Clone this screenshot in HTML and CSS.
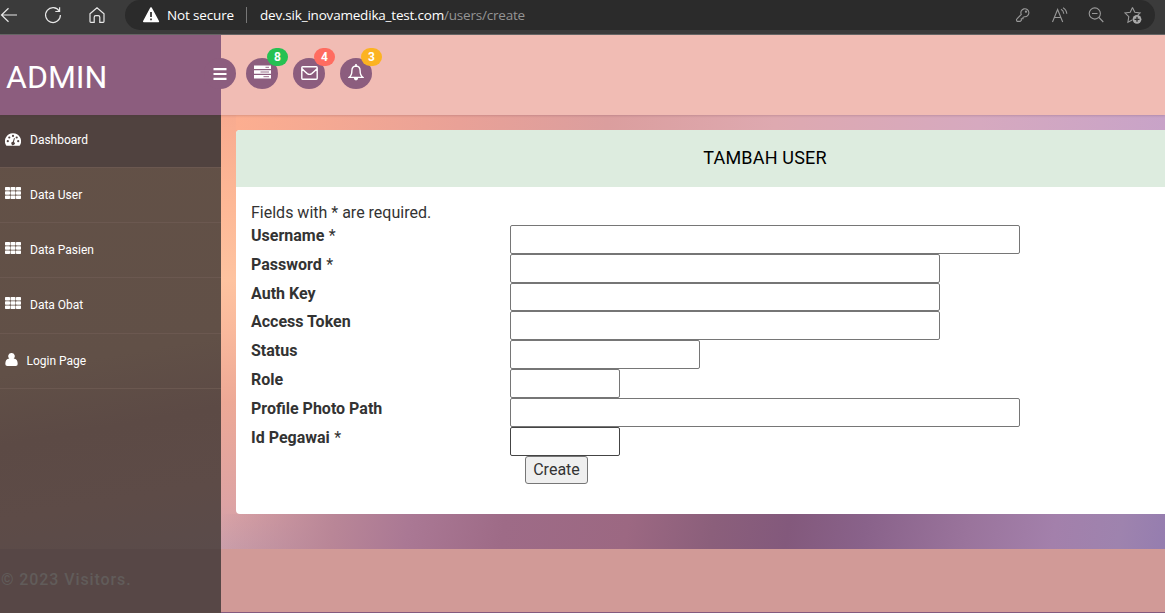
FILE: index.html
```html
<!DOCTYPE html>
<html lang="id">
<head>
<meta charset="utf-8">
<title>Tambah User</title>
<link rel="stylesheet" href="styles.css">
</head>
<body>
<svg class="defs" width="0" height="0">
  <symbol id="grid" viewBox="0 0 16 12"><path fill="currentColor" d="M.7 0h3.6q.7 0 .7.7v2.1q0 .7-.7.7H.7Q0 3.500 0 2.800V.7Q0 0 .7 0zM6.200 0h3.600q.7 0 .7.7v2.100q0 .7-.7.7H6.200q-.7 0-.7-.7V.7q0-.7.7-.7zM11.700 0h3.600q.7 0 .7.7v2.100q0 .7-.7.7h-3.600q-.7 0-.7-.7V.7q0-.7.7-.7zM.7 4.200h3.600q.7 0 .7.7v2.100q0 .7-.7.7H.7Q0 7.700 0 7V4.900q0-.7.7-.7zM6.200 4.200h3.600q.7 0 .7.7v2.100q0 .7-.7.7H6.200q-.7 0-.7-.7V4.900q0-.7.7-.7zM11.700 4.200h3.600q.7 0 .7.7v2.100q0 .7-.7.7h-3.600q-.7 0-.7-.7V4.900q0-.7.7-.7zM.7 8.400h3.600q.7 0 .7.7v2.200q0 .7-.7.7H.7q-.7 0-.7-.7V9.100q0-.7.7-.7zM6.200 8.400h3.600q.7 0 .7.7v2.200q0 .7-.7.7H6.200q-.7 0-.7-.7V9.100q0-.7.7-.7zM11.700 8.400h3.600q.7 0 .7.7v2.200q0 .7-.7.7h-3.600q-.7 0-.7-.7V9.100q0-.7.7-.7z"/></symbol>
</svg>

<div class="browser">
  <div class="nav">
    <svg width="18" height="18" viewBox="0 0 18 18"><path d="M17 9H1.500M8.500 2.200 1.500 9l7 6.800"/></svg>
    <svg width="18" height="18" viewBox="0 0 18 18"><path d="M15.300 5.200A7.400 7.400 0 1 0 16.400 9M15.600 1.200v4.300h-4.300"/></svg>
    <svg width="18" height="18" viewBox="0 0 18 18"><path d="M2 7.800 9 1.700l7 6.100v7.700q0 .8-.8.800h-3.400v-5q0-1.600-1.600-1.600H7.800q-1.600 0-1.600 1.600v5H2.800q-.8 0-.8-.8z"/></svg>
  </div>
  <div class="address">
    <svg class="warn" width="17" height="16" viewBox="0 0 17 16"><path d="M8 1 15.300 14.500H.8z" fill="#fff" stroke="#fff" stroke-width="1.600" stroke-linejoin="round"/><path d="M8 5v5M8 11.500v1.700" stroke="#2b2b2b" stroke-width="1.700"/></svg>
    <span class="insecure">Not secure</span>
    <span class="divider"></span>
    <span class="url">dev.sik_inovamedika_test.com<span>/users/create</span></span>
    <div class="tools">
      <svg width="16" height="16" viewBox="0 0 16 16"><path d="M6.300 7.500A4 4 0 1 1 9.400 9.700L8 10.300v1.500H6.300v1.600l-1.200 1H2.300q-.9-.4-.8-2z"/><circle cx="11" cy="4.700" r=".6"/></svg>
      <svg width="17" height="16" viewBox="0 0 17 16"><path d="M1.500 15 6.600 2.500 11.700 15M3.300 10.500h6.600M10 2.200q2.500 1.300 2.800 4.600M12 .7q3.500 2 3.800 6.100"/></svg>
      <svg width="16" height="16" viewBox="0 0 16 16"><circle cx="6.800" cy="6.500" r="5.600"/><path d="m11 10.500 4.300 4.500M4 6.500h5.500"/></svg>
      <svg width="18" height="18" viewBox="0 0 18 18"><path d="m8.500 1.500 2.300 4.700 5.300.7-2.500 2.500M8.500 1.500 6.200 6.200.9 6.900l3.900 3.800-.9 5.600 4.300-2.300"/><circle cx="13" cy="13.300" r="4.400" fill="#aaa" stroke="none"/><path d="M13 10.800v5M10.500 13.300h5" stroke="#2b2b2b" stroke-width="1.300"/></svg>
    </div>
  </div>
</div>

<header class="top">
  <div class="brand">ADMIN</div>
  <div class="round toggle"><svg width="14" height="12" viewBox="0 0 14 12"><path d="M.5 1.200h13M.5 6h13M.5 10.800h13" stroke="#fff" stroke-width="2.200"/></svg></div>
  <div class="round">
    <svg class="tasks" width="17" height="14" viewBox="0 0 17 14"><path fill="#fff" d="M0 .5h17v3.600H0zM0 5.200h17v3.600H0zM0 9.900h17v3.600H0z"/><path d="M11.500 2.300H15M6.500 7H15M9.500 11.700H15" stroke="#8c5d7e" stroke-width=".9"/></svg>
    <span class="badge green">8</span>
  </div>
  <div class="round">
    <svg width="17" height="14" viewBox="0 0 17 14"><path d="M1.700.8h13.600q.9 0 .9.900v10.600q0 .9-.9.900H1.700q-.9 0-.9-.9V1.700q0-.9.900-.9zM1 2.800q2.500 2.600 5.300 4.800 2.200 1.500 4.400 0Q13.500 5.400 16 2.800" fill="none" stroke="#fff" stroke-width="1.400"/></svg>
    <span class="badge red">4</span>
  </div>
  <div class="round">
    <svg class="bell" width="16" height="17" viewBox="0 0 16 17"><path d="M8 2Q4 2.400 3.900 6.500q0 4.800-2.700 6.900h13.600q-2.700-2.100-2.700-6.900Q12 2.400 8 2z" fill="none" stroke="#fff" stroke-width="1.400"/><path d="M7.200 0h1.600v2H7.200zM5.800 14h4.400Q10 16.400 8 16.400T5.800 14z" fill="#fff"/></svg>
    <span class="badge amber">3</span>
  </div>
</header>

<div class="body">
  <nav class="side">
    <a class="item active"><svg width="16" height="13" viewBox="0 0 16 13"><path fill="#fff" d="M8 .2a8 8 0 0 1 6.900 12.100q-.3.500-.8.500H1.900q-.5 0-.8-.5A8 8 0 0 1 8 .2z"/><g fill="#50423f"><circle cx="2.800" cy="8.200" r="1.100"/><circle cx="4.300" cy="4.500" r="1.100"/><circle cx="8" cy="2.900" r="1.100"/><circle cx="11.700" cy="4.500" r="1.100"/><circle cx="13.200" cy="8.200" r="1.100"/><path d="m9 5 .9.200-1 3.700a1.700 1.700 0 1 1-1.100-.2z"/></g></svg>Dashboard</a>
    <a class="item"><svg class="up" width="16" height="12"><use href="#grid"/></svg>Data User</a>
    <a class="item"><svg class="up" width="16" height="12"><use href="#grid"/></svg>Data Pasien</a>
    <a class="item"><svg class="up" width="16" height="12"><use href="#grid"/></svg>Data Obat</a>
    <a class="item login"><svg class="up" width="13" height="13" viewBox="0 0 13 13"><path fill="#fff" d="M6.500 0a3.200 3.200 0 0 1 2.200 5.600Q12.700 6 12.700 11q0 2-2 2H2.300q-2 0-2-2 0-5 4-5.400A3.200 3.200 0 0 1 6.500 0z"/></svg>Login Page</a>
  </nav>
  <main class="main">
    <section class="card">
      <h1>TAMBAH USER</h1>
      <form class="form">
        <p>Fields with * are required.</p>
        <div class="row"><label>Username <i>*</i></label><input class="w510"></div>
        <div class="row"><label>Password <i>*</i></label><input class="w430"></div>
        <div class="row"><label>Auth Key</label><input class="w430"></div>
        <div class="row"><label>Access Token</label><input class="w430"></div>
        <div class="row"><label>Status</label><input class="w190"></div>
        <div class="row"><label>Role</label><input class="w110"></div>
        <div class="row"><label>Profile Photo Path</label><input class="w510"></div>
        <div class="row"><label>Id Pegawai <i>*</i></label><input class="w110 dark"></div>
        <button type="button">Create</button>
      </form>
    </section>
  </main>
</div>
<footer class="foot"><div>© 2023 Visitors.</div></footer>
</body>
</html>
```
FILE: styles.css
```css
* { box-sizing: border-box; }
body { margin: 0; height: 613px; overflow: hidden; display: flex; flex-direction: column; font-family: Roboto, sans-serif; color: #333; }
.defs { position: absolute; }
svg { flex: none; display: block; }

.browser { height: 35px; flex: none; background: #3b3b3b; border-bottom: 1px solid #666; display: flex; align-items: flex-start; }
.nav { width: 125px; height: 30px; display: flex; align-items: center; gap: 26px; }
.nav svg { fill: none; stroke: #e8e8e8; stroke-width: 1.2; }
.address { width: 1030px; height: 30px; background: #2b2b2b; border-radius: 15px; display: flex; align-items: center; padding: 0 13px 0 18px; font: 14px "Open Sans", sans-serif; color: #fff; }
.insecure { margin-left: 7px; width: 79px; font-size: 13.5px; letter-spacing: -.15px; white-space: nowrap; }
.divider { width: 1px; height: 16px; background: #777; margin: 0 13px 0 0; }
.url { font-size: 13.5px; letter-spacing: -.2px; white-space: nowrap; }
.url span { color: #959595; }
.tools { margin-left: auto; display: flex; align-items: center; gap: 20px; }
.tools svg { fill: none; stroke: #999; stroke-width: 1.1; }

.top { height: 80px; flex: none; background: #f1bcb4; display: flex; align-items: flex-start; position: relative; z-index: 1; box-shadow: 0 1px 2px rgba(80, 40, 60, .18); }
.brand { width: 221px; height: 80px; background: #8c5d7e; color: #fff; font-size: 32px; line-height: 84px; padding-left: 6px; }
.round { width: 32px; height: 31px; margin: 23px 15px 0 0; border-radius: 50%; background: #8c5d7e; display: flex; align-items: center; justify-content: center; position: relative; }
.round svg { margin-top: -2px; }
.round .tasks { margin-top: -3px; }
.round .bell { margin-top: -3px; }
.toggle { margin-left: -17px; margin-right: 10px; }
.toggle svg { margin: 0 1px 0 0; }
.badge { position: absolute; left: 21px; top: -10px; width: 21px; height: 18px; border-radius: 9px; color: #fff; font-weight: 700; font-size: 12px; line-height: 18px; text-align: center; }
.green { background: #26c152; }
.red { background: #ff6c60; }
.amber { background: #fcb322; }

.body { height: 434px; flex: none; display: flex; }
.side { width: 221px; background: linear-gradient(170deg, #635147 0%, #615047 55%, #5c4a45 70%, #5d4b47 86%, #5a4b4a 100%); }
.item { height: 55.2px; display: flex; align-items: center; gap: 8.500px; padding: 0 0 1px 5.500px; border-bottom: 1px solid #6b5850; color: #fff; font-size: 12px; }
.active { height: 53px; background: #50423f; padding-top: 0; padding-bottom: 2px; }
.item svg { margin-left: -.5px; margin-right: .5px; }
.active svg { margin-top: -2px; }
.item .up { margin-top: -3px; }
.login { padding-top: 1px; padding-bottom: 0; gap: 8px; }
.main { flex: 1; padding: 15px 0 0 15px; background:
  linear-gradient(90deg, #fcae90 0%, #e9a197 24%, #db9e9e 40%, #dea9b0 58%, #d6a9bf 80%, #c8a3c8 100%) 15px 0 / 929px 15px no-repeat,
  linear-gradient(100deg, #d0a0aa00 0%, #b98697 12%, #aa7894 20%, #9e6b87 30%, #9c6882 43%, #8b5f7b 52%, #83597c 60%, #89628a 68%, #9a749c 79%, #a380ab 88%, #9e83ae 95%, #957daf 100%) 0 100% / 100% 35px no-repeat,
  linear-gradient(180deg, #f8ab90 0%, #fdb896 20%, #fec3a0 38%, #f9b99c 50%, #eda996 66%, #dda3a4 90%, #cba0ab 100%); }
.card { height: 384px; background: #fff; border-radius: 4px 0 0 4px; overflow: hidden; }
.card h1 { margin: 0; height: 57px; background: #ddecdf; color: #000; font-size: 18px; font-weight: 400; letter-spacing: .18px; line-height: 56px; text-align: center; padding-left: 129px; }
.form { padding: 14px 15px; font-size: 16px; }
.form p { margin: 0; height: 24px; line-height: 24px; }
.row { display: flex; height: 28.800px; }
.row label { width: 259px; font-weight: 700; line-height: 22px; color: #333; }
.row i { font-style: normal; font-weight: 400; margin-left: .5px; }
input { height: 28.800px; border: 1px solid #767676; border-radius: 2px; background: #fff; }
.w510 { width: 510px; }
.w430 { width: 430px; }
.w190 { width: 190px; }
.w110 { width: 110px; }
.row .dark { height: 29.400px; border-color: #444; }
button { display: block; margin: 1px 0 0 274px; width: 63px; height: 28px; padding: 0 0 2px; border: 1px solid #767676; border-radius: 3px; background: #efefef; color: #333; font: 16px Roboto, sans-serif; }

.foot { height: 64px; flex: none; background: #d19a97; border-bottom: 1px solid #835a7e; }
.foot div { width: 221px; height: 64px; background: #574746; color: #615c5a; font-size: 16px; font-weight: 500; letter-spacing: .9px; line-height: 61px; padding-left: 1px; }
```
